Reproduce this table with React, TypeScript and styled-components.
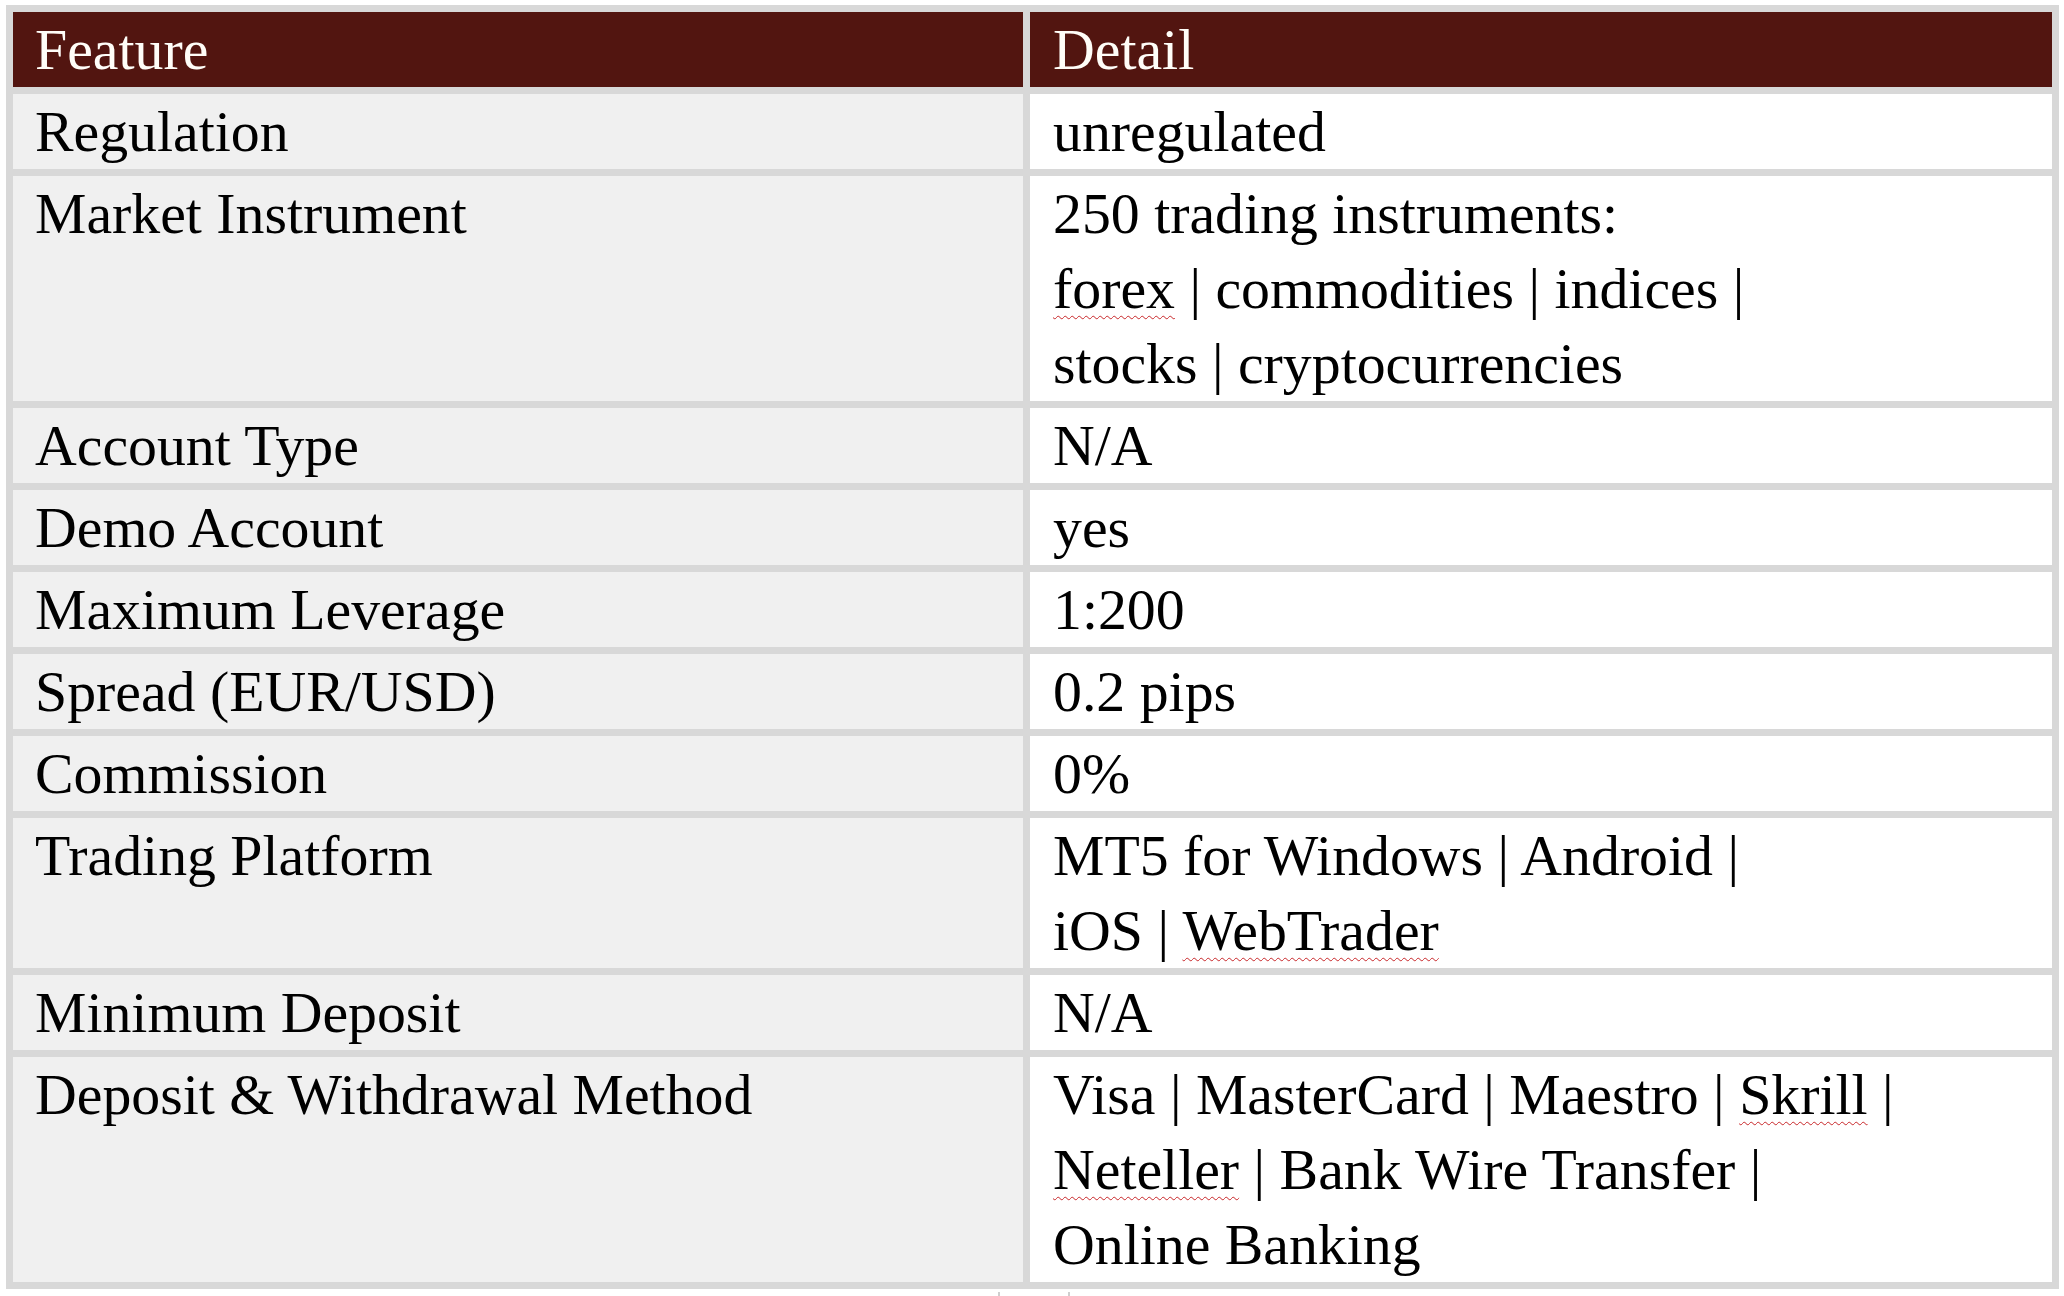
import React from "react";
import styled, { createGlobalStyle, css } from "styled-components";

const GlobalStyle = createGlobalStyle`
  html, body {
    margin: 0;
    padding: 0;
    background: #ffffff;
  }
  body {
    font-family: "Liberation Serif", "Times New Roman", serif;
  }
`;

const Page = styled.div`
  padding: 5px 0 0 6px;
  display: flex;
  flex-direction: column;
  align-items: flex-start;
`;

const Table = styled.div`
  display: grid;
  grid-template-columns: 1010px 1022px;
  gap: 7px;
  padding: 7px;
  background: #d8d8d8;
`;

const cellBase = css`
  padding: 0 0 0 22px;
  font-family: "Liberation Serif", "Times New Roman", serif;
  font-size: 57.8px;
  line-height: 75px;
  white-space: nowrap;
`;

const HeaderCell = styled.div<{ $right?: boolean }>`
  ${cellBase};
  padding-left: ${(p) => (p.$right ? "23px" : "22px")};
  background: #521510;
  color: #fffdf8;
`;

const Cell = styled.div<{ $label?: boolean }>`
  ${cellBase};
  padding-left: ${(p) => (p.$label ? "22px" : "23px")};
  background: ${(p) => (p.$label ? "#f0f0f0" : "#ffffff")};
  color: #000000;
`;

const Line = styled.div`
  display: block;
`;

const Spell = styled.span`
  text-decoration: underline wavy #c8272a;
  text-decoration-thickness: 1px;
  text-underline-offset: 7px;
  text-decoration-skip-ink: none;
`;

const Stub = styled.div`
  margin-left: 992px;
  margin-top: 3px;
  width: 68px;
  height: 4px;
  border-left: 2px solid #cfcfcf;
  border-right: 2px solid #cfcfcf;
  background: #ffffff;
`;

type Row = { label: string; value: React.ReactNode[] };

const rows: Row[] = [
  { label: "Regulation", value: ["unregulated"] },
  {
    label: "Market Instrument",
    value: [
      "250 trading instruments:",
      <>
        <Spell>forex</Spell> | commodities | indices |
      </>,
      "stocks | cryptocurrencies",
    ],
  },
  { label: "Account Type", value: ["N/A"] },
  { label: "Demo Account", value: ["yes"] },
  { label: "Maximum Leverage", value: ["1:200"] },
  { label: "Spread (EUR/USD)", value: ["0.2 pips"] },
  { label: "Commission", value: ["0%"] },
  {
    label: "Trading Platform",
    value: [
      "MT5 for Windows | Android |",
      <>
        iOS | <Spell>WebTrader</Spell>
      </>,
    ],
  },
  { label: "Minimum Deposit", value: ["N/A"] },
  {
    label: "Deposit & Withdrawal Method",
    value: [
      <>
        Visa | MasterCard | Maestro | <Spell>Skrill</Spell> |
      </>,
      <>
        <Spell>Neteller</Spell> | Bank Wire Transfer |
      </>,
      "Online Banking",
    ],
  },
];

export default function App() {
  return (
    <>
      <GlobalStyle />
      <Page>
        <Table>
          <HeaderCell>Feature</HeaderCell>
          <HeaderCell $right>Detail</HeaderCell>
          {rows.map((r) => (
            <React.Fragment key={r.label}>
              <Cell $label>{r.label}</Cell>
              <Cell>
                {r.value.map((v, i) => (
                  <Line key={i}>{v}</Line>
                ))}
              </Cell>
            </React.Fragment>
          ))}
        </Table>
        <Stub />
      </Page>
    </>
  );
}
